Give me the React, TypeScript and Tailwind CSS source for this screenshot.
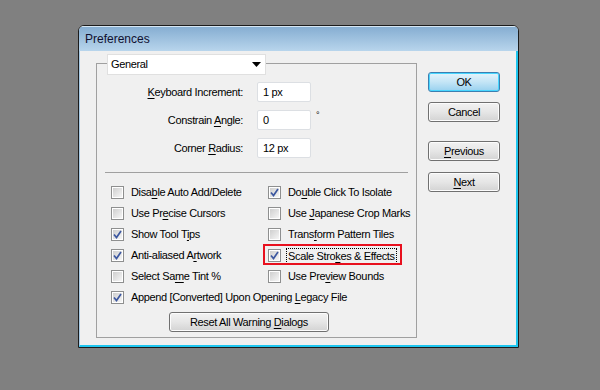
import React from "react";

const font = { fontFamily: '"Liberation Sans", Arial, sans-serif' };

// label text with an underlined access key
function Key({ text, k }: { text: string; k: number }) {
  return (
    <span className="whitespace-pre">
      {text.slice(0, k)}
      <span className="underline underline-offset-2">{text[k]}</span>
      {text.slice(k + 1)}
    </span>
  );
}

function Check({ on }: { on: boolean }) {
  return (
    <div className="w-[13px] h-[13px] border border-[#8e8f8f] bg-white p-[1px] shrink-0">
      <div className="w-full h-full bg-gradient-to-br from-[#cfcfcf] to-[#f6f6f6] flex items-center justify-center">
        {on && (
          <svg width="9" height="9" viewBox="0 0 9 9">
            <path d="M1 4.5 L3.5 7.5 L8 1" fill="none" stroke="#3d58a0" strokeWidth="1.7" />
          </svg>
        )}
      </div>
    </div>
  );
}

function Box({ on, text, k, focus }: { on: boolean; text: string; k: number; focus?: boolean }) {
  return (
    <div className="flex items-center gap-[5px] h-[21px] whitespace-nowrap">
      <Check on={on} />
      <span className={focus ? "border border-dotted border-black px-[1px] leading-[14px]" : "px-[2px]"}>
        <Key text={text} k={k} />
      </span>
    </div>
  );
}

function Btn({ label, k, primary }: { label: string; k?: number; primary?: boolean }) {
  return (
    <div
      className={
        "w-[72px] h-[20px] rounded-[3px] border flex items-center justify-center " +
        (primary
          ? "border-[#3c7fb1] bg-gradient-to-b from-[#e5f4fc] via-[#c4e5f6] to-[#98d1ef] shadow-[inset_0_0_0_1px_#48d6ff]"
          : "border-[#707070] bg-gradient-to-b from-[#f2f2f2] via-[#e6e6e6] to-[#d3d3d3] shadow-[inset_0_0_0_1px_#fcfcfc]")
      }
    >
      {k === undefined ? label : <Key text={label} k={k} />}
    </div>
  );
}

function Field({ label, k, value, deg }: { label: string; k: number; value: string; deg?: boolean }) {
  return (
    <div className="flex items-center h-[20px]">
      <div className="w-[146px] text-right">
        <Key text={label} k={k} />
      </div>
      <div className="ml-[14px] w-[54px] h-[20px] bg-white border border-[#dcdfe3] rounded-[2px] pl-[5px] flex items-center">
        {value}
      </div>
      {deg && <span className="ml-[5px] -mt-[8px] text-[9px]">°</span>}
    </div>
  );
}

export default function App() {
  return (
    <div className="w-[600px] h-[390px] bg-[#808080] pt-[25px] pl-[78px] text-[11px] tracking-[-0.35px] text-black" style={font}>
      <div className="w-[441px] h-[323px] flex flex-col border border-[#1c1c1c] rounded-t-[6px] overflow-hidden bg-[#f0f0f0]">
        <div className="h-[25px] bg-gradient-to-b from-[#86aed2] to-[#b8d5ec] border-t border-[#d6e6f2] pl-[6px] flex items-center text-[12px] tracking-normal text-[#101030]">
          Preferences
        </div>
        <div className="flex-1 flex border-l border-l-[#a9cbe6] border-r-2 border-r-[#1ec6ef] border-b-2 border-b-[#1ec6ef]">
          <div className="flex-1 flex pl-[16px] pt-[12px] bg-[#f0f0f0]">
            <div className="w-[321px] h-[275px] border border-[#a0a0a0] flex flex-col">
              <div className="ml-[10px] -mt-[10px] w-[159px] h-[21px] bg-white border border-[#e0e0e0] flex items-center pl-[3px] pr-[4px] justify-between">
                <span>General</span>
                <svg width="9" height="5" viewBox="0 0 9 5">
                  <path d="M0 0 H9 L4.5 5 Z" fill="#000" />
                </svg>
              </div>
              <div className="flex flex-col gap-[8px] mt-[7px]">
                <Field label="Keyboard Increment:" k={0} value="1 px" />
                <Field label="Constrain Angle:" k={10} value="0" deg />
                <Field label="Corner Radius:" k={7} value="12 px" />
              </div>
              <div className="mx-[8px] mt-[14px] border-t border-[#a0a0a0]" />
              <div className="mt-[9px] pl-[14px] grid grid-cols-[157px_1fr]">
                <Box on={false} text="Disable Auto Add/Delete" k={4} />
                <Box on text="Double Click To Isolate" k={2} />
                <Box on={false} text="Use Precise Cursors" k={6} />
                <Box on={false} text="Use Japanese Crop Marks" k={4} />
                <Box on text="Show Tool Tips" k={11} />
                <Box on={false} text="Transform Pattern Tiles" k={5} />
                <Box on text="Anti-aliased Artwork" k={14} />
                <div className="relative">
                  <Box on text="Scale Strokes & Effects" k={10} focus />
                  <div className="absolute left-[-5px] top-[-1px] w-[139px] h-[21px] border-2 border-[#e8101e]" />
                </div>
                <Box on={false} text="Select Same Tint %" k={9} />
                <Box on={false} text="Use Preview Bounds" k={7} />
                <div className="col-span-2">
                  <Box on text="Append [Converted] Upon Opening Legacy File" k={32} />
                </div>
              </div>
              <div className="mt-[4px] ml-[72px] w-[160px] h-[20px] rounded-[3px] border border-[#707070] bg-gradient-to-b from-[#f2f2f2] via-[#e6e6e6] to-[#d3d3d3] shadow-[inset_0_0_0_1px_#fcfcfc] flex items-center justify-center">
                <Key text="Reset All Warning Dialogs" k={18} />
              </div>
            </div>
            <div className="ml-[11px] pt-[9px] flex flex-col">
              <Btn label="OK" primary />
              <div className="mt-[10px]"><Btn label="Cancel" /></div>
              <div className="mt-[19px]"><Btn label="Previous" k={0} /></div>
              <div className="mt-[11px]"><Btn label="Next" k={0} /></div>
            </div>
          </div>
        </div>
      </div>
    </div>
  );
}
